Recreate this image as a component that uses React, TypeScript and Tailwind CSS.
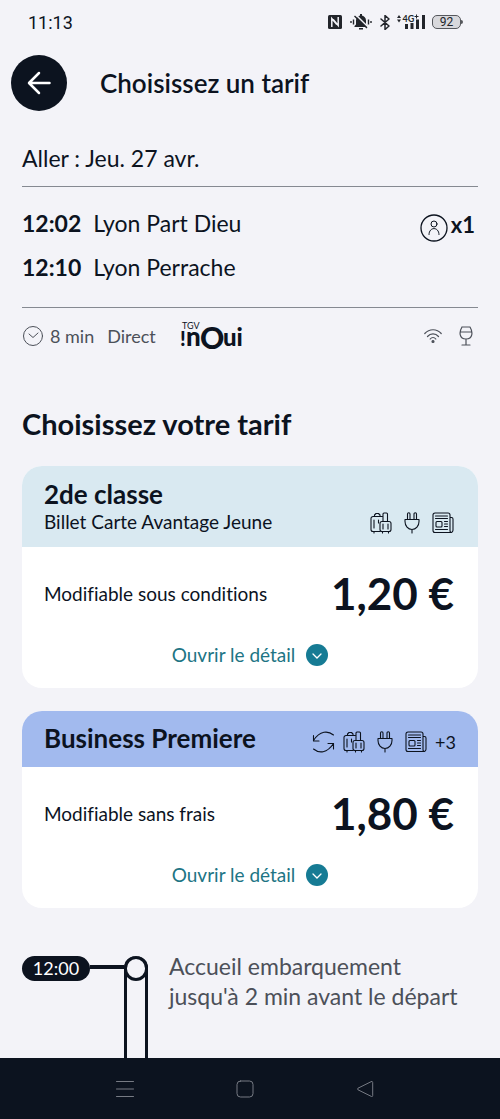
import type { ReactNode } from "react";

type IconProps = { className?: string };

const line = {
  fill: "none",
  stroke: "currentColor",
  strokeLinecap: "round" as const,
  strokeLinejoin: "round" as const,
  "aria-hidden": true,
};

const Luggage = ({ className = "" }: IconProps) => (
  <svg {...line} viewBox="0 0 22 22" strokeWidth="1.1" className={`h-[22px] w-[22px] ${className}`}>
    <path d="M10 19.500H3a2 2 0 0 1-2-2v-11a2 2 0 0 1 2-2h9.500M4.500 4.500V3L6 1.500h2.500L10 3v1.500M4 8v8M4 19.500V21M8.500 8v3" />
    <path d="M13 9.500V2a1 1 0 0 1 1-1h2.500a1 1 0 0 1 1 1v7.500" />
    <rect x="10" y="9.500" width="11" height="10" rx="2" />
    <path d="M13 12v5M18 12v5M12.500 19.500V21M18.500 19.500V21" />
  </svg>
);

const Plug = ({ className = "" }: IconProps) => (
  <svg {...line} viewBox="0 0 16 22" strokeWidth="1.1" className={`h-[22px] w-4 ${className}`}>
    <path d="M3.500 7.500V2a1 1 0 0 1 2.500 0v5.500M10 7.500V2a1 1 0 0 1 2.500 0v5.500M1 7.500h14v2c0 4.500-3 8-7 8s-7-3.500-7-8zM8 17.500V21" />
  </svg>
);

const News = ({ className = "" }: IconProps) => (
  <svg {...line} viewBox="0 0 22 22" strokeWidth="1.1" className={`h-[22px] w-[22px] ${className}`}>
    <path d="M18 5.500h1.500A1.500 1.500 0 0 1 21 7v11a2.500 2.500 0 0 1-2.500 2.500H3A2 2 0 0 1 1 18.500V3a2 2 0 0 1 2-2h13a2 2 0 0 1 2 2v15.500a2 2 0 0 0 1 2M3.500 4h12M3.500 6.500h12M3.500 17.500h12M12.500 9.500h3M12.500 12h3M12.500 14.500h3" />
    <rect x="4" y="9.500" width="6" height="5.500" rx="1" />
  </svg>
);

const Exchange = () => (
  <svg {...line} viewBox="0 0 23 22" strokeWidth="1.1" className="h-[22px] w-[23px]">
    <path d="M21.500 4C16-.5 8-.5 1.500 9.500M1.500 4.500v5.500H7M1.500 18C7 22.500 15 22.500 21.500 12.500M16 12.500h5.500V18" />
  </svg>
);

const StatusIcons = () => (
  <div className="flex items-center text-[#22252b]">
    <svg viewBox="0 0 14 14" className="mr-2 h-[14px] w-[14px]" aria-hidden="true">
      <rect width="14" height="14" rx="1.500" fill="currentColor" />
      <path d="M3.800 12V3.500l5 6M10.200 2v8.500l-5-6" fill="none" stroke="#f3f3f8" strokeWidth="1.500" />
    </svg>
    <svg viewBox="0 0 22 16" className="mr-2 h-4 w-[22px]" aria-hidden="true">
      <path d="M4.500 13v-1L6 10.500v-4a5 5 0 0 1 10 0v4l1.500 1.500v1zM9 14h4v1.500H9zM10 0h2v3h-2z" fill="currentColor" />
      <path d="m5.500.5 13 13" stroke="#f3f3f8" strokeWidth="1.500" />
      <path d="m4.500 2 12.500 12M3.500 5.500v5M1 7v2M18.500 5.500v5M21 7v2" stroke="currentColor" strokeWidth="1.400" fill="none" />
    </svg>
    <svg viewBox="0 0 10 15" className="mr-[7px] h-[15px] w-[10px]" {...line} strokeWidth="1.500">
      <path d="m1 4 8 7-4 3.500v-14L9 4l-8 7" />
    </svg>
    <svg viewBox="0 0 28 16" className="mr-[7px] h-4 w-7" aria-hidden="true">
      <path d="m0 4 2-3 2 3zM0 5.500l2 3 2-3zM8 10h3v5H8zM13.500 9h3v6h-3zM19 5.500h3V15h-3zM25 1h3v14h-3z" fill="currentColor" />
      <text x="5.500" y="8" fontSize="9" fontWeight="700" fill="currentColor">4G</text>
      <path d="M17.500 2.500h4M19.500.5v4" stroke="currentColor" />
    </svg>
    <div className="flex items-center">
      <div className="flex h-[14px] w-[29px] items-center justify-center rounded-[5px] border border-[#55575c] bg-[#d8d8dc] font-[Roboto] text-[12px] leading-none">92</div>
      <div className="h-1 w-[2px] rounded-r bg-[#55575c]" />
    </div>
  </div>
);

type FareProps = {
  id: string;
  title: string;
  subtitle?: string;
  conditions: string;
  price: string;
  headerClass: string;
  icons: ReactNode;
};

const FareCard = ({ id, title, subtitle, conditions, price, headerClass, icons }: FareProps) => (
  <article aria-labelledby={id} className="overflow-hidden rounded-[20px] bg-white">
    <div className={`flex items-end justify-between px-[22px] ${headerClass}`}>
      <div>
        <h3 id={id} className="text-[26px] font-bold leading-8">{title}</h3>
        {subtitle && <p className="text-[19px] leading-6">{subtitle}</p>}
      </div>
      {icons}
    </div>
    <div className="flex items-center justify-between pl-[22px] pr-6 pt-5">
      <p className="pt-0.5 text-[19px] leading-6">{conditions}</p>
      <p className="text-[44px] font-bold leading-[52px]">{price}</p>
    </div>
    <div className="flex justify-center pb-[21px] pt-[23px]">
      <button type="button" className="flex items-center gap-[11px] text-[19px] leading-[25px] text-[#207484]">
        Ouvrir le détail
        <svg viewBox="0 0 22 22" className="h-[22px] w-[22px]" aria-hidden="true">
          <circle cx="11" cy="11" r="11" fill="#167b94" />
          <path d="m7 10 4 4 4-4" fill="none" stroke="#fff" strokeWidth="1.300" strokeLinecap="round" />
        </svg>
      </button>
    </div>
  </article>
);

const Stop = ({ time, name }: { time: string; name: string }) => (
  <li className="flex gap-3">
    <time className="font-bold">{time}</time>
    <span>{name}</span>
  </li>
);

export default function App() {
  return (
    <div className="flex min-h-screen flex-col bg-[#f3f3f8] font-[Lato,sans-serif] text-[#0c131f] [font-variant-ligatures:none]">
      <div className="flex h-11 items-center justify-between pl-7 pr-[37px]">
        <span className="font-[Roboto,sans-serif] text-[18px]">11:13</span>
        <StatusIcons />
      </div>
      <header className="flex items-center gap-[33px] px-[11px] pt-[11px]">
        <button type="button" aria-label="Retour" className="flex h-14 w-14 items-center justify-center rounded-full bg-[#0c131f] text-white">
          <svg viewBox="0 0 24 24" className="h-6 w-6" {...line} strokeWidth="2.500">
            <path d="M22.500 12h-20M12 2 2 12l10 10" />
          </svg>
        </button>
        <h1 className="text-[26px] font-semibold leading-8">Choisissez un tarif</h1>
      </header>

      <main className="flex flex-1 flex-col px-[22px] pt-[31px]">
        <section aria-label="Trajet">
          <p className="border-b border-[#858991] pb-3 text-[23px] leading-8">Aller : Jeu. 27 avr.</p>
          <div className="flex items-start justify-between border-b border-[#858991] pb-6 pt-5">
            <ol className="flex flex-col gap-3 text-[23px] leading-8">
              <Stop time="12:02" name="Lyon Part Dieu" />
              <Stop time="12:10" name="Lyon Perrache" />
            </ol>
            <div className="flex items-start gap-[3px] pr-[3px] pt-1 text-[22px] font-bold leading-7">
              <svg viewBox="0 0 28 28" className="mt-[3px] h-7 w-7" {...line} strokeWidth="1.300">
                <circle cx="14" cy="14" r="13" />
                <circle cx="14" cy="10" r="3" strokeWidth="1" />
                <path d="M9 20.500c0-8 10-8 10 0" strokeWidth="1" />
              </svg>
              x1
            </div>
          </div>
          <div className="flex items-center justify-between pt-3 text-[#4c5059]">
            <div className="flex items-center text-[18px] leading-8">
              <svg viewBox="0 0 22 22" className="mr-1.5 h-[22px] w-[22px]" {...line} strokeWidth="1">
                <circle cx="11" cy="11" r="9.500" />
                <path d="m7 9 4 3.500L16 8" />
              </svg>
              <span>8 min</span>
              <span className="ml-[13px]">Direct</span>
              <svg viewBox="0 0 64 30" className="ml-6 h-[30px] w-16 overflow-visible text-[#0c131f]" role="img" aria-label="TGV inOui" fill="currentColor">
                <text x="2" y="8" fontSize="9">TGV</text>
                <text x="0" y="25" fontSize="20" fontWeight="900">!</text>
                <text x="6" y="25" fontSize="26" fontWeight="900">n</text>
                <text x="20" y="28" fontSize="30" fontWeight="900">O</text>
                <text x="43" y="25" fontSize="24" fontWeight="900">ui</text>
              </svg>
            </div>
            <div className="flex items-center gap-[17px] pr-[5px]">
              <svg viewBox="0 0 18 16" className="h-4 w-[18px]" {...line} strokeWidth="1.200">
                <path d="M.8 5.500c4.500-5 12-5 16.400 0M3.500 8.500c3-3.500 8-3.500 11 0M6.200 11c1.600-2 4-2 5.600 0" />
                <circle cx="9" cy="13.500" r="1" fill="currentColor" />
              </svg>
              <svg viewBox="0 0 14 20" className="h-5 w-[14px]" {...line} strokeWidth="1.200">
                <path d="M3 1h8c3 5 3 12-4 12S0 6 3 1M1.500 6h11M7 13v6M3 19h8" />
              </svg>
            </div>
          </div>
        </section>

        <h2 className="mt-[52px] text-[29px] font-bold leading-10">Choisissez votre tarif</h2>

        <div className="mt-[22px] flex flex-col gap-[23px]">
          <FareCard
            id="fare-second"
            title="2de classe"
            subtitle="Billet Carte Avantage Jeune"
            conditions="Modifiable sous conditions"
            price="1,20 €"
            headerClass="bg-[#d9e9f1] pt-3 pb-[13px]"
            icons={<div className="flex items-center gap-3 pr-0.5"><Luggage /><Plug /><News /></div>}
          />
          <FareCard
            id="fare-business"
            title="Business Premiere"
            conditions="Modifiable sans frais"
            price="1,80 €"
            headerClass="bg-[#a2baee] pt-[11px] pb-[13px]"
            icons={
              <div className="flex items-center gap-2">
                <Exchange />
                <Luggage />
                <Plug className="ml-1" />
                <News className="ml-1" />
                <span className="text-[18px] leading-6">+3</span>
              </div>
            }
          />
        </div>

        <section aria-label="Embarquement" className="mt-[43px] flex flex-1">
          <time className="mt-[5px] flex h-[25px] w-[68px] items-center justify-center rounded-full bg-[#0c131f] text-[18px] text-white">12:00</time>
          <div className="mt-[14px] h-1 w-[34px] bg-[#0c131f]" />
          <div className="mt-[5px] flex w-6 flex-col rounded-t-full border-x-[3px] border-[#0c131f]">
            <div className="-mx-[3px] h-[25px] rounded-full border-[3px] border-[#0c131f]" />
          </div>
          <p className="ml-[21px] flex-1 text-[23px] leading-[30px] text-[#4c5059]">
            Accueil embarquement<br />jusqu'à 2 min avant le départ
          </p>
        </section>
      </main>

      <nav aria-label="Navigation système" className="flex h-[61px] items-center justify-center gap-[84px] bg-[#0c131f] pr-2.5 text-[#777b84]">
        <button type="button" aria-label="Applications récentes" className="p-[9px]">
          <svg viewBox="0 0 18 18" className="h-[18px] w-[18px]" {...line}>
            <path d="M.5 1.500h17M.5 9h17M.5 16.500h17" />
          </svg>
        </button>
        <button type="button" aria-label="Accueil" className="p-[9px]">
          <svg viewBox="0 0 18 18" className="h-[18px] w-[18px]" {...line}>
            <rect x="1" y="1" width="16" height="16" rx="3.500" />
          </svg>
        </button>
        <button type="button" aria-label="Précédent" className="p-[9px]">
          <svg viewBox="0 0 18 18" className="h-[18px] w-[18px]" {...line}>
            <path d="M15.500 1.500 2 8.200q-1.200.8 0 1.600l13.500 6.700q1.200.3 1.200-1V2.500q0-1.300-1.200-1" />
          </svg>
        </button>
      </nav>
    </div>
  );
}
